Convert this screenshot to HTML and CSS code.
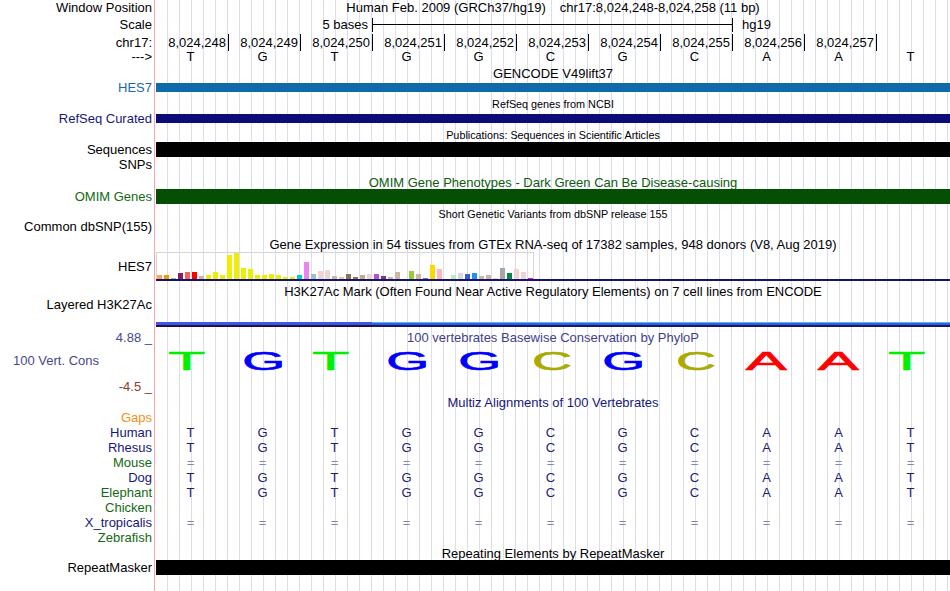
FILE: index.html
```html
<!DOCTYPE html>
<html lang="en">
<head>
    <meta charset="UTF-8">
    <title>UCSC Genome Browser - chr17:8,024,248-8,024,258</title>
    <link rel="stylesheet" href="styles.css">
</head>
<body>
<div class="browser">

    <div class="row h16">
        <div class="lab">Window Position</div>
        <div class="dat center">Human Feb. 2009 (GRCh37/hg19)<span class="loc">chr17:8,024,248-8,024,258 (11 bp)</span></div>
    </div>

    <div class="row h18">
        <div class="lab">Scale</div>
        <div class="dat scale">
            <span class="scale-txt">5 bases</span>
            <span class="scale-bar"></span>
            <span class="scale-db">hg19</span>
        </div>
    </div>

    <div class="row pos-row">
        <div class="lab">chr17:</div>
        <div class="dat cols pos">
            <span>8,024,248</span><span>8,024,249</span><span>8,024,250</span><span>8,024,251</span>
            <span>8,024,252</span><span>8,024,253</span><span>8,024,254</span><span>8,024,255</span>
            <span>8,024,256</span><span>8,024,257</span><span></span>
        </div>
    </div>

    <div class="row h16">
        <div class="lab">---&gt;</div>
        <div class="dat cols bases">
            <span>T</span><span>G</span><span>T</span><span>G</span><span>G</span><span>C</span>
            <span>G</span><span>C</span><span>A</span><span>A</span><span>T</span>
        </div>
    </div>

    <!-- GENCODE -->
    <div class="row h16 title-row">
        <div class="lab"></div>
        <div class="dat center lh18">GENCODE V49lift37</div>
    </div>
    <div class="row h13">
        <div class="lab c-gencode">HES7</div>
        <div class="dat"><div class="feat thin gencode"></div></div>
    </div>

    <!-- RefSeq -->
    <div class="row small-title" style="height:18px">
        <div class="lab"></div>
        <div class="dat center">RefSeq genes from NCBI</div>
    </div>
    <div class="row h13">
        <div class="lab c-navy">RefSeq Curated</div>
        <div class="dat"><div class="feat thin refseq"></div></div>
    </div>

    <!-- Publications -->
    <div class="row small-title" style="height:17px">
        <div class="lab"></div>
        <div class="dat center">Publications: Sequences in Scientific Articles</div>
    </div>
    <div class="row h15">
        <div class="lab">Sequences</div>
        <div class="dat"><div class="feat black"></div></div>
    </div>
    <div class="row h16">
        <div class="lab">SNPs</div>
        <div class="dat"></div>
    </div>

    <!-- OMIM -->
    <div class="row h16">
        <div class="lab"></div>
        <div class="dat center lh20 c-omim">OMIM Gene Phenotypes - Dark Green Can Be Disease-causing</div>
    </div>
    <div class="row h15">
        <div class="lab c-green">OMIM Genes</div>
        <div class="dat"><div class="feat omim"></div></div>
    </div>

    <!-- dbSNP -->
    <div class="row small-title" style="height:15px">
        <div class="lab"></div>
        <div class="dat center lh20">Short Genetic Variants from dbSNP release 155</div>
    </div>
    <div class="row h16">
        <div class="lab">Common dbSNP(155)</div>
        <div class="dat"></div>
    </div>

    <!-- GTEx -->
    <div class="row" style="height:17px">
        <div class="lab"></div>
        <div class="dat center lh19">Gene Expression in 54 tissues from GTEx RNA-seq of 17382 samples, 948 donors (V8, Aug 2019)</div>
    </div>
    <div class="row gtex-row">
        <div class="lab">HES7</div>
        <div class="dat">
            <div class="gtex">
                <i style="height:4px;background:#ffa54f"></i>
                <i style="height:4px;background:#ee9a00"></i>
                <i style="height:1px;background:#8fbc8f"></i>
                <i style="height:6px;background:#8b1c62"></i>
                <i style="height:7px;background:#ee6a50"></i>
                <i style="height:7px;background:#ff0000"></i>
                <i style="height:3px;background:#cdb79e"></i>
                <i style="height:4px;background:#eeee00"></i>
                <i style="height:7px;background:#eeee00"></i>
                <i style="height:4px;background:#eeee00"></i>
                <i style="height:24px;background:#eeee00"></i>
                <i style="height:26px;background:#eeee00"></i>
                <i style="height:11px;background:#eeee00"></i>
                <i style="height:10px;background:#eeee00"></i>
                <i style="height:4px;background:#eeee00"></i>
                <i style="height:4px;background:#eeee00"></i>
                <i style="height:5px;background:#eeee00"></i>
                <i style="height:4px;background:#eeee00"></i>
                <i style="height:2px;background:#eeee00"></i>
                <i style="height:2px;background:#eeee00"></i>
                <i style="height:4px;background:#00cdcd"></i>
                <i style="height:17px;background:#ee82ee"></i>
                <i style="height:5px;background:#9ac0cd"></i>
                <i style="height:8px;background:#eed5d2"></i>
                <i style="height:9px;background:#eed5d2"></i>
                <i style="height:3px;background:#cdb79e"></i>
                <i style="height:2px;background:#eec591"></i>
                <i style="height:5px;background:#8b7355"></i>
                <i style="height:2px;background:#8b7355"></i>
                <i style="height:4px;background:#cdaa7d"></i>
                <i style="height:5px;background:#eed5d2"></i>
                <i style="height:5px;background:#b452cd"></i>
                <i style="height:3px;background:#7a378b"></i>
                <i style="height:2px;background:#cdb79e"></i>
                <i style="height:7px;background:#cdb79e"></i>
                <i style="height:0;background:#cdb79e"></i>
                <i style="height:8px;background:#9acd32"></i>
                <i style="height:5px;background:#cdb79e"></i>
                <i style="height:1px;background:#7a67ee"></i>
                <i style="height:14px;background:#ffd700"></i>
                <i style="height:10px;background:#ffb6c1"></i>
                <i style="height:0;background:#cd9b1d"></i>
                <i style="height:4px;background:#b4eeb4"></i>
                <i style="height:6px;background:#d9d9d9"></i>
                <i style="height:5px;background:#3a5fcd"></i>
                <i style="height:6px;background:#1e90ff"></i>
                <i style="height:3px;background:#cdb79e"></i>
                <i style="height:4px;background:#cdb79e"></i>
                <i style="height:1px;background:#ffd39b"></i>
                <i style="height:11px;background:#a6a6a6"></i>
                <i style="height:6px;background:#008b45"></i>
                <i style="height:10px;background:#eed5d2"></i>
                <i style="height:7px;background:#eed5d2"></i>
                <i style="height:1px;background:#ff00ff"></i>
            </div>
            <div class="gtex-base"></div>
        </div>
    </div>

    <!-- H3K27Ac -->
    <div class="row" style="height:17px">
        <div class="lab"></div>
        <div class="dat center lh21">H3K27Ac Mark (Often Found Near Active Regulatory Elements) on 7 cell lines from ENCODE</div>
    </div>
    <div class="row layered-row">
        <div class="lab lh14">Layered H3K27Ac</div>
        <div class="dat layers">
            <div class="layer left"></div>
            <div class="layer right"></div>
        </div>
    </div>

    <!-- PhyloP -->
    <div class="row cons-row">
        <div class="lab cons-lab">
            <div class="top">4.88 _</div>
            <div class="mid">100 Vert. Cons</div>
            <div class="bot">-4.5 _</div>
        </div>
        <div class="dat">
            <div class="center lh19 c-slate">100 vertebrates Basewise Conservation by PhyloP</div>
            <div class="cols logo">
                <span><b class="lt">T</b></span><span><b class="lg">G</b></span><span><b class="lt">T</b></span>
                <span><b class="lg">G</b></span><span><b class="lg">G</b></span><span><b class="lc">C</b></span>
                <span><b class="lg">G</b></span><span><b class="lc">C</b></span><span><b class="la">A</b></span>
                <span><b class="la">A</b></span><span><b class="lt">T</b></span>
            </div>
        </div>
    </div>

    <!-- Multiz -->
    <div class="row h14">
        <div class="lab"></div>
        <div class="dat center c-navy">Multiz Alignments of 100 Vertebrates</div>
    </div>
    <div class="row h15">
        <div class="lab c-orange">Gaps</div>
        <div class="dat"></div>
    </div>
    <div class="row h15">
        <div class="lab c-navy">Human</div>
        <div class="dat cols maf">
            <span>T</span><span>G</span><span>T</span><span>G</span><span>G</span><span>C</span>
            <span>G</span><span>C</span><span>A</span><span>A</span><span>T</span>
        </div>
    </div>
    <div class="row h15">
        <div class="lab c-navy">Rhesus</div>
        <div class="dat cols maf">
            <span>T</span><span>G</span><span>T</span><span>G</span><span>G</span><span>C</span>
            <span>G</span><span>C</span><span>A</span><span>A</span><span>T</span>
        </div>
    </div>
    <div class="row h15">
        <div class="lab c-green">Mouse</div>
        <div class="dat cols maf dbl">
            <span>=</span><span>=</span><span>=</span><span>=</span><span>=</span><span>=</span>
            <span>=</span><span>=</span><span>=</span><span>=</span><span>=</span>
        </div>
    </div>
    <div class="row h15">
        <div class="lab c-navy">Dog</div>
        <div class="dat cols maf">
            <span>T</span><span>G</span><span>T</span><span>G</span><span>G</span><span>C</span>
            <span>G</span><span>C</span><span>A</span><span>A</span><span>T</span>
        </div>
    </div>
    <div class="row h15">
        <div class="lab c-green">Elephant</div>
        <div class="dat cols maf">
            <span>T</span><span>G</span><span>T</span><span>G</span><span>G</span><span>C</span>
            <span>G</span><span>C</span><span>A</span><span>A</span><span>T</span>
        </div>
    </div>
    <div class="row h15">
        <div class="lab c-green">Chicken</div>
        <div class="dat"></div>
    </div>
    <div class="row h15">
        <div class="lab c-navy">X_tropicalis</div>
        <div class="dat cols maf dbl">
            <span>=</span><span>=</span><span>=</span><span>=</span><span>=</span><span>=</span>
            <span>=</span><span>=</span><span>=</span><span>=</span><span>=</span>
        </div>
    </div>
    <div class="row h15">
        <div class="lab c-green">Zebrafish</div>
        <div class="dat"></div>
    </div>

    <!-- RepeatMasker -->
    <div class="row h15">
        <div class="lab"></div>
        <div class="dat center lh18">Repeating Elements by RepeatMasker</div>
    </div>
    <div class="row h15">
        <div class="lab lh16">RepeatMasker</div>
        <div class="dat"><div class="feat black"></div></div>
    </div>

    <div class="row fill">
        <div class="lab"></div>
        <div class="dat"></div>
    </div>
</div>
</body>
</html>
```

FILE: styles.css
```css
body {
    margin: 0;
    font-family: "Liberation Sans", Arial, sans-serif;
    font-size: 13px;
    color: #000;
    background: #fff;
}
.browser {
    width: 950px;
    height: 591px;
    display: flex;
    flex-direction: column;
    overflow: hidden;
    background: repeating-linear-gradient(to right, transparent 0 11px, #dcdcf5 11px 12px);
}
.row {
    display: flex;
    flex: none;
}
.lab {
    width: 155px;
    box-sizing: border-box;
    flex: none;
    padding-right: 2px;
    border-right: 1px solid #f4a9a9;
    background: #fff;
    text-align: right;
    white-space: nowrap;
}
.dat {
    flex: 1;
    min-width: 0;
    border-left: 1px solid #fff;
    white-space: nowrap;
}
.center {
    text-align: center;
}
.fill {
    flex: 1;
}

/* row heights */
.h13 { height: 13px; line-height: 13px; }
.h14 { height: 14px; line-height: 14px; }
.h15 { height: 15px; line-height: 15px; }
.h16 { height: 16px; line-height: 16px; }
.h18 { height: 18px; line-height: 18px; }
.lh14 { line-height: 14px; }
.lh16 { line-height: 16px; }
.lh18 { line-height: 18px; }
.lh19 { line-height: 19px; }
.lh20 { line-height: 20px; }
.lh21 { line-height: 21px; }

.small-title .dat {
    font-size: 10.8px;
    line-height: 21px;
}
.small-title .dat.lh20 {
    line-height: 20px;
}

/* colours */
.c-gencode { color: #1a6aa8; }
.c-navy { color: #17177a; }
.c-green { color: #136913; }
.c-omim { color: #0d5c0d; }
.c-slate { color: #3f3f8c; }
.c-orange { color: #f39012; }

/* header */
.loc {
    margin-left: 14px;
}
.scale {
    display: flex;
    align-items: flex-start;
}
.scale-txt {
    width: 212px;
    padding-right: 4px;
    text-align: right;
}
.scale-bar {
    width: 359px;
    height: 14px;
    margin-top: 2px;
    border-left: 1px solid #000;
    border-right: 1px solid #000;
    background: linear-gradient(#000, #000) 0 6px / 100% 1px no-repeat;
}
.scale-db {
    margin-left: 9px;
}
.cols {
    display: grid;
    grid-template-columns: repeat(11, 72px);
}
.pos-row {
    height: 15px;
    line-height: 17px;
}
.pos span {
    border-left: 1px solid #000;
    padding-right: 2px;
    text-align: right;
}
.pos span:first-child {
    border-left-color: transparent;
}
.bases span,
.maf span {
    text-align: center;
    padding-right: 3px;
}
.maf {
    color: #1d1d6f;
}
.maf.dbl {
    color: #8585b5;
}

/* features */
.feat {
    height: 15px;
}
.feat.thin {
    height: 9px;
    margin-top: 2px;
}
.gencode { background: #0e6aaa; }
.refseq { background: #0c0c78; }
.black { background: #000; }
.omim { background: #044f04; }

/* gtex */
.gtex-row {
    height: 29px;
    line-height: 30px;
}
.gtex {
    width: 376px;
    height: 26px;
    border: 1px solid #d6d6d6;
    border-bottom: none;
    display: flex;
    align-items: flex-end;
    gap: 2px;
}
.gtex i {
    width: 5px;
    flex: none;
}
.gtex-base {
    height: 2px;
    background: #14146e;
}

/* h3k27ac */
.layered-row {
    height: 30px;
}
.layers {
    display: flex;
    align-items: flex-end;
    padding-bottom: 1px;
}
.layer {
    height: 5px;
}
.layer.left {
    width: 216px;
    background: linear-gradient(#3b56ee 0 3px, #2a0d3c 3px);
}
.layer.right {
    flex: 1;
    background: linear-gradient(#3fc2f4 0 1px, #3b56ee 1px 3px, #1b1b58 3px);
}

/* conservation */
.cons-row {
    height: 68px;
}
.cons-lab .top {
    line-height: 19px;
    color: #48488c;
}
.cons-lab .mid {
    line-height: 28px;
    padding-right: 53px;
    color: #48488c;
}
.cons-lab .bot {
    line-height: 23px;
    color: #8b3b2e;
}
.logo span {
    text-align: center;
    font-size: 25px;
    font-weight: normal;
    line-height: 28px;
}
.logo b {
    display: inline-block;
    font-weight: normal;
    -webkit-text-stroke: 0.6px currentColor;
}
.lt { color: #00f000; transform: translateX(-5px) scaleX(2.42); }
.lg { color: #0000ff; transform: scaleX(2.21); }
.lc { color: #aaaa00; transform: scaleX(2.22); }
.la { color: #ff0000; transform: translateX(-2px) scaleX(2.46); }
```
